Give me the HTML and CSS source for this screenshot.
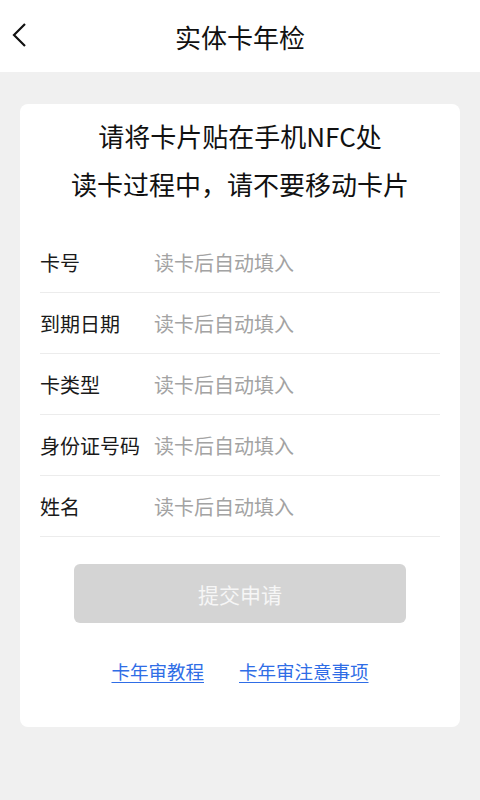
FILE: index.html
```html
<!DOCTYPE html>
<html lang="zh-CN">
<head>
<meta charset="utf-8">
<title>实体卡年检</title>
<link rel="stylesheet" href="styles.css">
</head>
<body>
<header class="topbar">
  <span class="back">
    <svg width="24" height="30" viewBox="0 0 24 30"><polyline points="15,3 4,14 15,25" fill="none" stroke="#111" stroke-width="2.2"/></svg>
  </span>
  <h1 class="title">实体卡年检</h1>
</header>
<main class="page">
  <section class="card">
    <div class="tips">
      <p>请将卡片贴在手机NFC处</p>
      <p>读卡过程中，请不要移动卡片</p>
    </div>
    <div class="form">
      <div class="row"><span class="label">卡号</span><span class="value">读卡后自动填入</span></div>
      <div class="row"><span class="label">到期日期</span><span class="value">读卡后自动填入</span></div>
      <div class="row"><span class="label">卡类型</span><span class="value">读卡后自动填入</span></div>
      <div class="row"><span class="label">身份证号码</span><span class="value">读卡后自动填入</span></div>
      <div class="row"><span class="label">姓名</span><span class="value">读卡后自动填入</span></div>
    </div>
    <button class="submit">提交申请</button>
    <div class="links">
      <a href="#">卡年审教程</a>
      <a href="#">卡年审注意事项</a>
    </div>
  </section>
</main>
</body>
</html>
```

FILE: styles.css
```css
* { box-sizing: border-box; }
html, body { margin: 0; padding: 0; }
body {
  width: 480px;
  min-height: 800px;
  background: #f0f0f0;
  font-family: "Noto Sans CJK SC", "Noto Sans", sans-serif;
  color: #1a1a1a;
}
.topbar {
  height: 72px;
  background: #fff;
  display: flex;
  align-items: center;
  justify-content: center;
  position: relative;
}
.back {
  position: absolute;
  left: 10px;
  top: 21px;
  width: 24px;
  height: 30px;
  display: flex;
}
.title {
  margin: 0;
  font-size: 26px;
  font-weight: 400;
  color: #111;
}
.page {
  padding: 32px 20px 0;
}
.card {
  background: #fff;
  border-radius: 8px;
  padding: 8px 20px 41px;
  display: flex;
  flex-direction: column;
}
.tips p {
  margin: 0;
  text-align: center;
  font-size: 26px;
  line-height: 48px;
  color: #111;
}
.form {
  margin-top: 24px;
}
.row {
  height: 61px;
  border-bottom: 1px solid #ececec;
  display: flex;
  align-items: center;
  font-size: 20px;
}
.label {
  width: 114px;
  flex: none;
  color: #1a1a1a;
}
.value {
  color: #a3a3a3;
}
.submit {
  margin: 27px auto 0;
  width: 332px;
  height: 59px;
  border: none;
  border-radius: 6px;
  background: #d4d4d4;
  color: #f6f6f6;
  font-family: inherit;
  font-size: 21px;
}
.links {
  margin-top: 33px;
  display: flex;
  justify-content: center;
  gap: 35px;
  line-height: 30px;
}
.links a {
  font-size: 18.5px;
  color: #2f6de6;
  text-decoration: underline;
  text-underline-offset: 3px;
}
```
